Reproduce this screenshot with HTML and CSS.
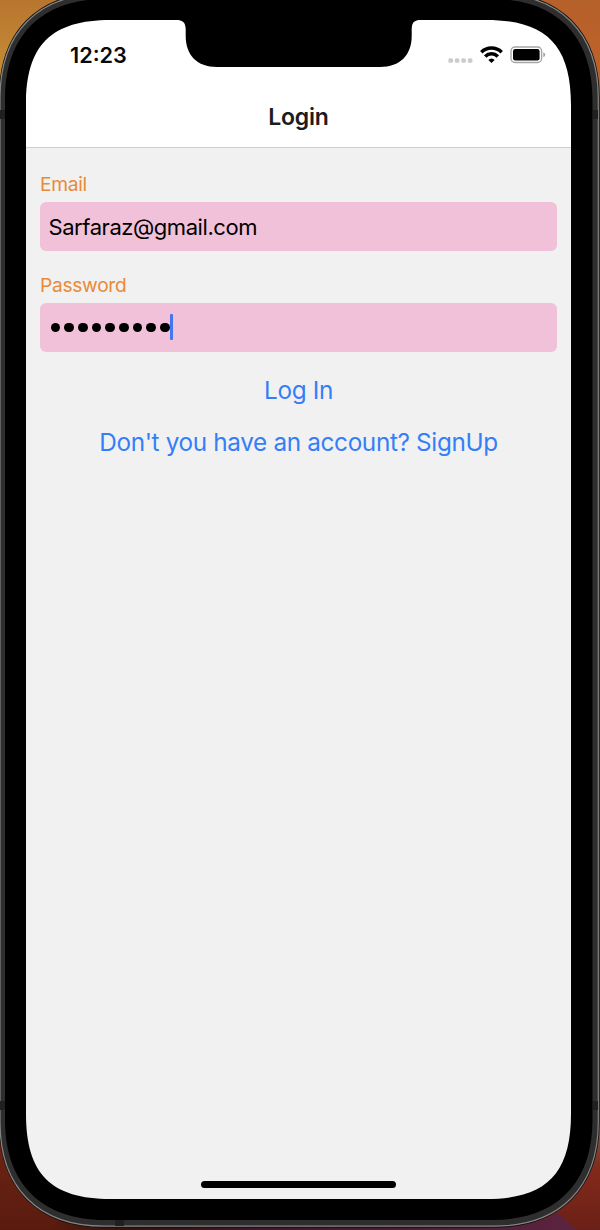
FILE: index.html
```html
<!DOCTYPE html>
<html lang="en">
<head>
<meta charset="utf-8">
<title>Login</title>
<link rel="stylesheet" href="styles.css">
</head>
<body>
<div class="stage">
  <main class="screen">
    <header class="header">
      <div class="status">
        <span class="time">12:23</span>
        <div class="indicators">
          <svg class="cell" width="26" height="6" viewBox="0 0 26 6"><rect x="0.4" y="0.2" width="4.6" height="4.6" rx="1.5"/><rect x="6.8" y="0.2" width="4.6" height="4.6" rx="1.5"/><rect x="13.3" y="0.2" width="4.6" height="4.6" rx="1.5"/><rect x="19.8" y="0.2" width="4.6" height="4.6" rx="1.5"/></svg>
          <svg class="wifi" width="24" height="18" viewBox="0 0 24 18"><path d="M1.3 6.2A14.6 14.6 0 0 1 21.7 6.2M5.2 10.4A9 9 0 0 1 17.8 10.4"/><path class="wifi-base" d="M11.5 17.1L8.300 14Q11.500 11 14.700 14Z"/></svg>
          <svg class="battery" width="36" height="18" viewBox="0 0 36 18"><rect class="shell" x="1" y="1" width="30.6" height="15.5" rx="4"/><rect x="3" y="3" width="26.6" height="11.5" rx="2.3"/><path class="cap" d="M33.3 6.3Q35.2 7 35.2 8.8Q35.2 10.6 33.3 11.3Z"/></svg>
        </div>
      </div>
      <h1 class="title">Login</h1>
    </header>
    <form class="form">
      <label class="label">Email</label>
      <div class="field"><span class="value">Sarfaraz@gmail.com</span></div>
      <label class="label label-password">Password</label>
      <div class="field">
        <span class="dots"><i></i><i></i><i></i><i></i><i></i><i></i><i></i><i></i><i></i></span><span class="caret"></span>
      </div>
      <a class="link login">Log In</a>
      <a class="link signup">Don't you have an account? SignUp</a>
    </form>
    <div class="home"></div>
  </main>
  <svg class="device" width="600" height="1230" viewBox="0 0 600 1230">
    <defs>
      <linearGradient id="wall" x1="0" y1="0" x2="0" y2="1">
        <stop offset="0" stop-color="#b6742d"/><stop offset=".06" stop-color="#c58a35"/><stop offset=".5" stop-color="#68615e"/><stop offset=".93" stop-color="#6b2413"/><stop offset="1" stop-color="#5a1b0e"/>
      </linearGradient>
      <linearGradient id="wallRight" x1="0" y1="0" x2="0" y2="1">
        <stop offset="0" stop-color="#b5602b"/><stop offset=".06" stop-color="#be6128"/><stop offset=".1" stop-color="#6d6460"/><stop offset=".91" stop-color="#6d6460"/><stop offset=".95" stop-color="#822a1b"/><stop offset="1" stop-color="#6b2017"/>
      </linearGradient>
      <linearGradient id="floor"><stop offset="0" stop-color="#5a1b0e"/><stop offset=".15" stop-color="#35120d"/><stop offset=".4" stop-color="#42152a"/><stop offset="1" stop-color="#5b2440"/></linearGradient>
    </defs>
    <path fill="url(#wall)" fill-rule="evenodd" d="M0 0H300V1230H0ZM0 98C0 32 38 -7 104 -7H300V1227H104C38 1227 0 1188 0 1122Z"/>
    <path fill="url(#wallRight)" fill-rule="evenodd" d="M300 0H600V1230H300ZM300 -7H494C560 -7 599 32 599 98V1122C599 1188 560 1227 494 1227H300Z"/>
    <path fill="url(#floor)" d="M60 1218C78 1225 94 1227 104 1227H494C520 1227 540 1222 558 1213L576 1230H50Z"/>
    <path fill="#2e2e2e" fill-rule="evenodd" stroke="#111" stroke-width="1.4" d="M-.5 98C-.5 31.6 37.6 -7 104 -7H494C560 -7 599 31.6 599 98V1122C599 1188 560 1227 494 1227H104C37.6 1227 -.5 1188 -.5 1122ZM14 101C14 40 45 8 107 8H490C552 8 583 40 583 101V1118C583 1179 552 1211 490 1211H107C45 1211 14 1179 14 1118Z"/>
    <path fill="none" stroke="#858585" stroke-width="1.2" d="M0 98C0 32.2 38.2 -6.2 104 -6.2H494C559.6 -6.2 598.3 32.2 598.3 98V1122C598.3 1187.8 559.6 1226.2 494 1226.2H104C38.2 1226.2 0 1187.8 0 1122Z"/>
    <path fill="#000" fill-rule="evenodd" d="M5 99C5 35.5 41.5 -1 105 -1H492.5C556 -1 592.5 35.5 592.5 99V1120C592.5 1183.5 556 1220 492.5 1220H105C41.5 1220 5 1183.5 5 1120ZM26 105V1114C26 1174 51 1199 111 1199H486C546 1199 571 1174 571 1114V105C571 45 546 20 486 20H421C414 20 412 22.5 411.7 29V36C411.7 55 400 67 380 67H217C197 67 185.7 55 185.7 36V29C185.4 22.5 183 20 176 20H111C51 20 26 45 26 105Z"/>
    <path fill="#202020" d="M0 110H5V119H0ZM0 1101H5V1110H0ZM593 110H598V119H593ZM593 1101H598V1110H593ZM115 1220H124V1226H115Z"/>
  </svg>
</div>
</body>
</html>
```
FILE: styles.css
```css
* { box-sizing: border-box; }
body { margin: 0; background: #000; font-family: Inter, "Liberation Sans", sans-serif; }
.stage { position: relative; width: 600px; height: 1230px; padding: 20px 29px 31px 26px; overflow: hidden; }
.device { position: absolute; inset: 0; pointer-events: none; }
.screen { display: flex; flex-direction: column; height: 1179px; background: #f1f1f1; }
.header { height: 128px; background: #fff; border-bottom: 1px solid #cecece; }
.status { display: flex; justify-content: space-between; height: 70px; padding: 22px 25px 0 44px; }
.time { font-size: 21.7px; line-height: 26px; font-weight: 600; color: #0a0a0a; }
.indicators { display: flex; align-items: flex-start; padding-top: 3.5px; }
.cell { margin: 12.5px 6px 0 0; fill: #cbcbcb; }
.wifi { margin-right: 6px; fill: none; stroke: #000; stroke-width: 3.5; }
.wifi .wifi-base { fill: #000; stroke: none; }
.battery .shell { fill: none; stroke: #a6a6a6; stroke-width: 1.4; }
.battery .cap { fill: #a0a0a0; }
.title { margin: 12px 0 0; text-align: center; font-size: 23px; letter-spacing: -.2px; line-height: 30px; font-weight: 600; color: #1c1c1e; }
.form { display: flex; flex-direction: column; flex: 1; padding: 24px 14px 0; }
.label { height: 30px; line-height: 25px; font-size: 19.2px; letter-spacing: -.3px; color: #e98a37; }
.label-password { margin-top: 22px; }
.field { display: flex; align-items: center; height: 49px; padding-left: 8.5px; border-radius: 6px; background: #f1c0d9; }
.value { font-size: 22px; letter-spacing: -.44px; color: #000; }
.dots { display: flex; gap: 3.9px; padding-left: 2px; }
.dots i { width: 9.8px; height: 9.8px; border-radius: 50%; background: #000; }
.caret { width: 3px; height: 26px; margin-bottom: 2px; border-radius: 1px; background: #4676ed; }
.link { text-align: center; font-size: 24.3px; line-height: 30px; letter-spacing: -.34px; color: #347ff7; }
.login { margin-top: 23px; letter-spacing: -.3px; }
.signup { margin-top: 22px; }
.home { align-self: center; width: 195px; height: 7px; margin-bottom: 11px; border-radius: 4px; background: #000; }
```
